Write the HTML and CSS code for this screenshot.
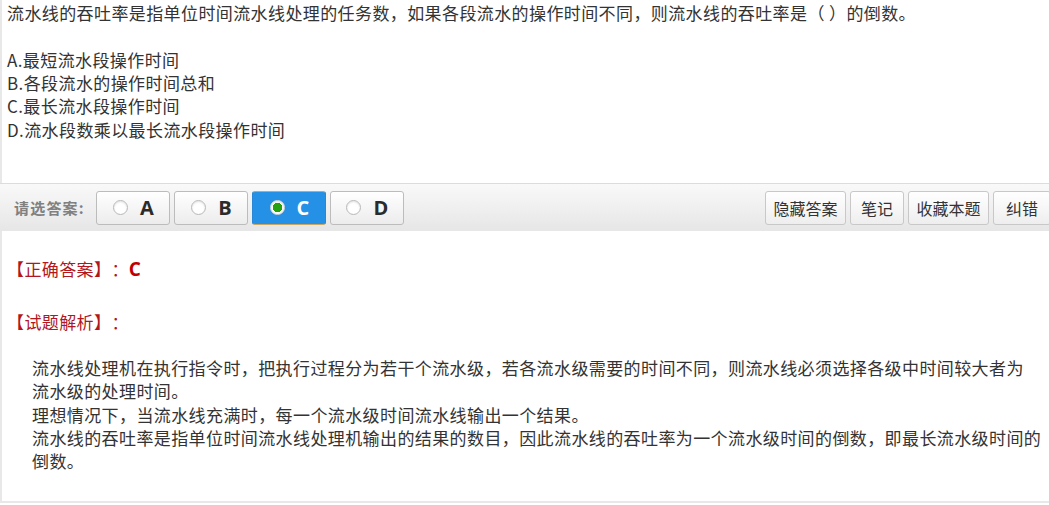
FILE: index.html
```html
<!DOCTYPE html>
<html lang="zh-CN">
<head>
    <meta charset="UTF-8">
    <meta name="viewport" content="width=device-width, initial-scale=1.0">
    <title>试题 - 流水线吞吐率</title>
    <link rel="stylesheet" href="styles.css">
</head>
<body>
    <!-- 题干与选项 -->
    <div class="question">
        <p class="stem">流水线的吞吐率是指单位时间流水线处理的任务数，如果各段流水的操作时间不同，则流水线的吞吐率是（ ）的倒数。</p>
        <ul class="options">
            <li>A.最短流水段操作时间</li>
            <li>B.各段流水的操作时间总和</li>
            <li>C.最长流水段操作时间</li>
            <li>D.流水段数乘以最长流水段操作时间</li>
        </ul>
    </div>

    <!-- 作答工具栏 -->
    <div class="toolbar">
        <span class="toolbar-label">请选答案:</span>
        <div class="choices">
            <button class="choice"><i class="radio"></i>A</button>
            <button class="choice"><i class="radio"></i>B</button>
            <button class="choice selected"><i class="radio"></i>C</button>
            <button class="choice"><i class="radio"></i>D</button>
        </div>
        <div class="actions">
            <button class="action">隐藏答案</button>
            <button class="action short">笔记</button>
            <button class="action">收藏本题</button>
            <button class="action last">纠错</button>
        </div>
    </div>

    <!-- 答案与解析 -->
    <div class="answer">
        <p class="key">【正确答案】：<b class="key-value">C</b></p>
        <p class="key second">【试题解析】：</p>
        <div class="analysis">
            流水线处理机在执行指令时，把执行过程分为若干个流水级，若各流水级需要的时间不同，则流水线必须选择各级中时间较大者为<br>流水级的处理时间。<br>
            理想情况下，当流水线充满时，每一个流水级时间流水线输出一个结果。<br>
            流水线的吞吐率是指单位时间流水线处理机输出的结果的数目，因此流水线的吞吐率为一个流水级时间的倒数，即最长流水级时间的<br>倒数。
        </div>
    </div>
</body>
</html>
```

FILE: styles.css
```css
html, body {
    margin: 0;
    padding: 0;
    overflow: hidden;
}
body {
    font-family: "Noto Sans CJK SC", "Noto Sans", sans-serif;
    font-size: 17px;
    letter-spacing: 0.4px;
    line-height: 23.3px;
    color: #333;
    background: #fff;
    text-spacing-trim: space-all;
}
p {
    margin: 0;
}

/* question */
.question {
    border-left: 2px solid #e8e8e8;
    padding: 1px 0 42px 5px;
}
.stem {
    margin-bottom: 23.6px;
}
.options {
    list-style: none;
    margin: 0;
    padding: 0;
}

/* toolbar */
.toolbar {
    display: flex;
    align-items: center;
    height: 47px;
    padding-left: 14px;
    border-top: 1px solid #dcdcdc;
    background: linear-gradient(to bottom, #f9f9f9, #e6e6e6);
    overflow: hidden;
    letter-spacing: 0;
}
.toolbar-label {
    font-size: 15px;
    font-weight: bold;
    color: #808080;
    margin-right: 11px;
    letter-spacing: 1.2px;
}
.choices {
    display: flex;
    gap: 4px;
}
.choice {
    display: flex;
    align-items: center;
    justify-content: center;
    gap: 12px;
    width: 74px;
    height: 34px;
    padding: 0 0 0 1px;
    border: 1px solid #bcbcbc;
    border-radius: 3px;
    background: linear-gradient(to bottom, #ffffff, #ececec);
    font-family: "Open Sans", "Noto Sans", sans-serif;
    font-size: 20px;
    font-weight: bold;
    color: #2b2b2b;
    cursor: pointer;
}
.radio {
    display: inline-block;
    width: 15px;
    height: 15px;
    box-sizing: border-box;
    border: 1px solid #b8b8b8;
    border-radius: 50%;
    background: #fff;
    box-shadow: inset 0 1px 2px rgba(0, 0, 0, 0.12);
}
.choice.selected {
    background: #2490e6;
    border-color: #c9a765 #2a86d6 #c9a765 #2a86d6;
    color: #fff;
}
.choice.selected .radio {
    border-color: #d8d8d8;
    background: radial-gradient(circle, #25a112 0, #25a112 4.5px, #fff 5px);
}
.actions {
    display: flex;
    gap: 4px;
    margin-left: auto;
    margin-right: -2px;
}
.action {
    height: 34px;
    padding: 0 7.5px;
    border: 1px solid #c8c8c8;
    border-radius: 3px;
    background: linear-gradient(to bottom, #ffffff, #eeeeee);
    font-family: "Noto Sans CJK SC", sans-serif;
    font-size: 16px;
    letter-spacing: 0;
    color: #333;
    cursor: pointer;
}
.action.short {
    padding: 0 10px;
}
.action.last {
    padding: 0 12px;
}

/* answer */
.answer {
    border-left: 2px solid #e8e8e8;
    border-bottom: 2px solid #e8e8e8;
    padding: 26px 0 28px 5px;
}
.key {
    color: #b2161e;
}
.key.second {
    margin-top: 28.7px;
}
.key-value {
    font-family: "Open Sans", sans-serif;
    font-size: 19px;
    color: #c00000;
}
.analysis {
    margin-top: 22.7px;
    padding-left: 25px;
    color: #333;
}
```
